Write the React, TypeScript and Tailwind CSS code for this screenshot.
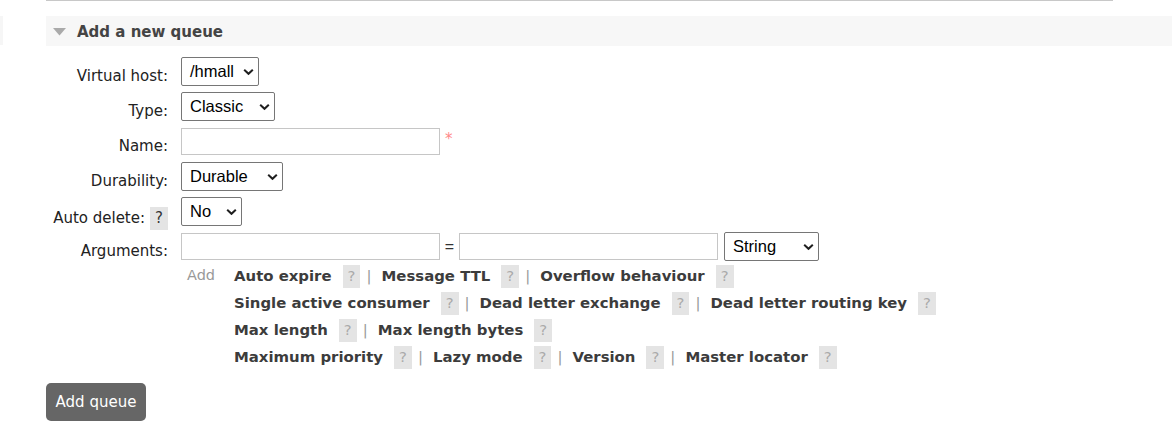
import React from "react";

const Chevron = () => (
  <svg
    className="pointer-events-none absolute right-[5px] top-1/2 -translate-y-1/2"
    width="11"
    height="7"
    viewBox="0 0 11 7"
    fill="none"
  >
    <path d="M1.2 1.2 L5.5 5.3 L9.8 1.2" stroke="#1f1f1f" strokeWidth="2" />
  </svg>
);

function Select({ value, width }: { value: string; width: string }) {
  return (
    <div className={`relative h-[29px] ${width}`}>
      <div className="flex h-full w-full items-center rounded-[2px] border border-[#767676] bg-white pl-[8px] font-['Liberation_Sans',Arial,sans-serif] text-[16.5px] leading-none text-black">
        {value}
      </div>
      <Chevron />
    </div>
  );
}

function Input({ width }: { width: string }) {
  return <div className={`h-[27px] ${width} border border-[#c6c6c6] bg-white`} />;
}

function Row({
  label,
  children,
  help,
}: {
  label: string;
  children: React.ReactNode;
  help?: boolean;
}) {
  return (
    <div className="flex h-[35px]">
      <div className="w-[122px] pt-[13px] text-right leading-[18px] text-[#222]">
        {label}
        {help && (
          <span className="ml-[5px] inline-block bg-[#e4e4e4] px-[5px] align-baseline leading-[23px] text-[#333]">
            ?
          </span>
        )}
      </div>
      <div className="ml-[13px] flex h-full items-center">{children}</div>
    </div>
  );
}

function LinkLine({ items }: { items: string[] }) {
  return (
    <div className="h-[27px] whitespace-nowrap text-[14.9px] leading-[27px]">
      {items.map((it, i) => (
        <React.Fragment key={it}>
          {i > 0 && <span className="ml-[6px] mr-[10px] inline-block text-[#999]">|</span>}
          <span className="font-bold text-[#3c3c3c]">{it}</span>
          <span className="ml-[11px] inline-block bg-[#e4e4e4] px-[5px] leading-[23px] text-[#aaa]">
            ?
          </span>
        </React.Fragment>
      ))}
    </div>
  );
}

export default function App() {
  return (
    <div className="flex h-[429px] w-[1172px] overflow-hidden bg-white font-['DejaVu_Sans',Verdana,sans-serif] text-[15px]">
      <div className="mt-[16px] h-[29px] w-[3px] bg-[#f6f6f6]" />
      <div className="ml-[43px] flex flex-1 flex-col">
        <div className="h-[1px] w-[1067px] bg-[#c8c8c8]" />
        <div className="mt-[15px] flex h-[30px] items-center bg-[#f7f7f7] pl-[7px]">
          <svg width="13" height="8" viewBox="0 0 13 8" className="mt-[1px]">
            <path d="M0 0 L13 0 L6.5 7.5 Z" fill="#aaa" />
          </svg>
          <span className="ml-[11px] pt-[3px] text-[15px] font-bold text-[#444]">
            Add a new queue
          </span>
        </div>

        <div className="mt-[8px] flex flex-col">
          <Row label="Virtual host:">
            <Select value="/hmall" width="w-[78px]" />
          </Row>
          <Row label="Type:">
            <Select value="Classic" width="w-[94px]" />
          </Row>
          <Row label="Name:">
            <Input width="w-[259px]" />
            <span className="ml-[5px] self-start pt-[4px] text-[#f88]">*</span>
          </Row>
          <Row label="Durability:">
            <Select value="Durable" width="w-[102px]" />
          </Row>
          <Row label="Auto delete:" help>
            <Select value="No" width="w-[61px]" />
          </Row>
          <Row label="Arguments:">
            <Input width="w-[259px]" />
            <span className="w-[19px] text-center font-['Liberation_Sans',Arial,sans-serif] text-[16px] text-[#333]">
              =
            </span>
            <Input width="w-[259px]" />
            <div className="ml-[6px]">
              <Select value="String" width="w-[95px]" />
            </div>
          </Row>

          <div className="flex">
            <div className="w-[135px]" />
            <div className="w-[53px] pl-[6px] pt-[2px] text-[14.5px] leading-[18px] text-[#999]">
              Add
            </div>
            <div className="-mt-[1px] flex flex-col">
              <LinkLine items={["Auto expire", "Message TTL", "Overflow behaviour"]} />
              <LinkLine
                items={["Single active consumer", "Dead letter exchange", "Dead letter routing key"]}
              />
              <LinkLine items={["Max length", "Max length bytes"]} />
              <LinkLine items={["Maximum priority", "Lazy mode", "Version", "Master locator"]} />
            </div>
          </div>
        </div>

        <button className="mt-[12px] h-[38px] w-[100px] rounded-[5px] bg-[#666] text-[15px] text-white">
          Add queue
        </button>
      </div>
    </div>
  );
}
